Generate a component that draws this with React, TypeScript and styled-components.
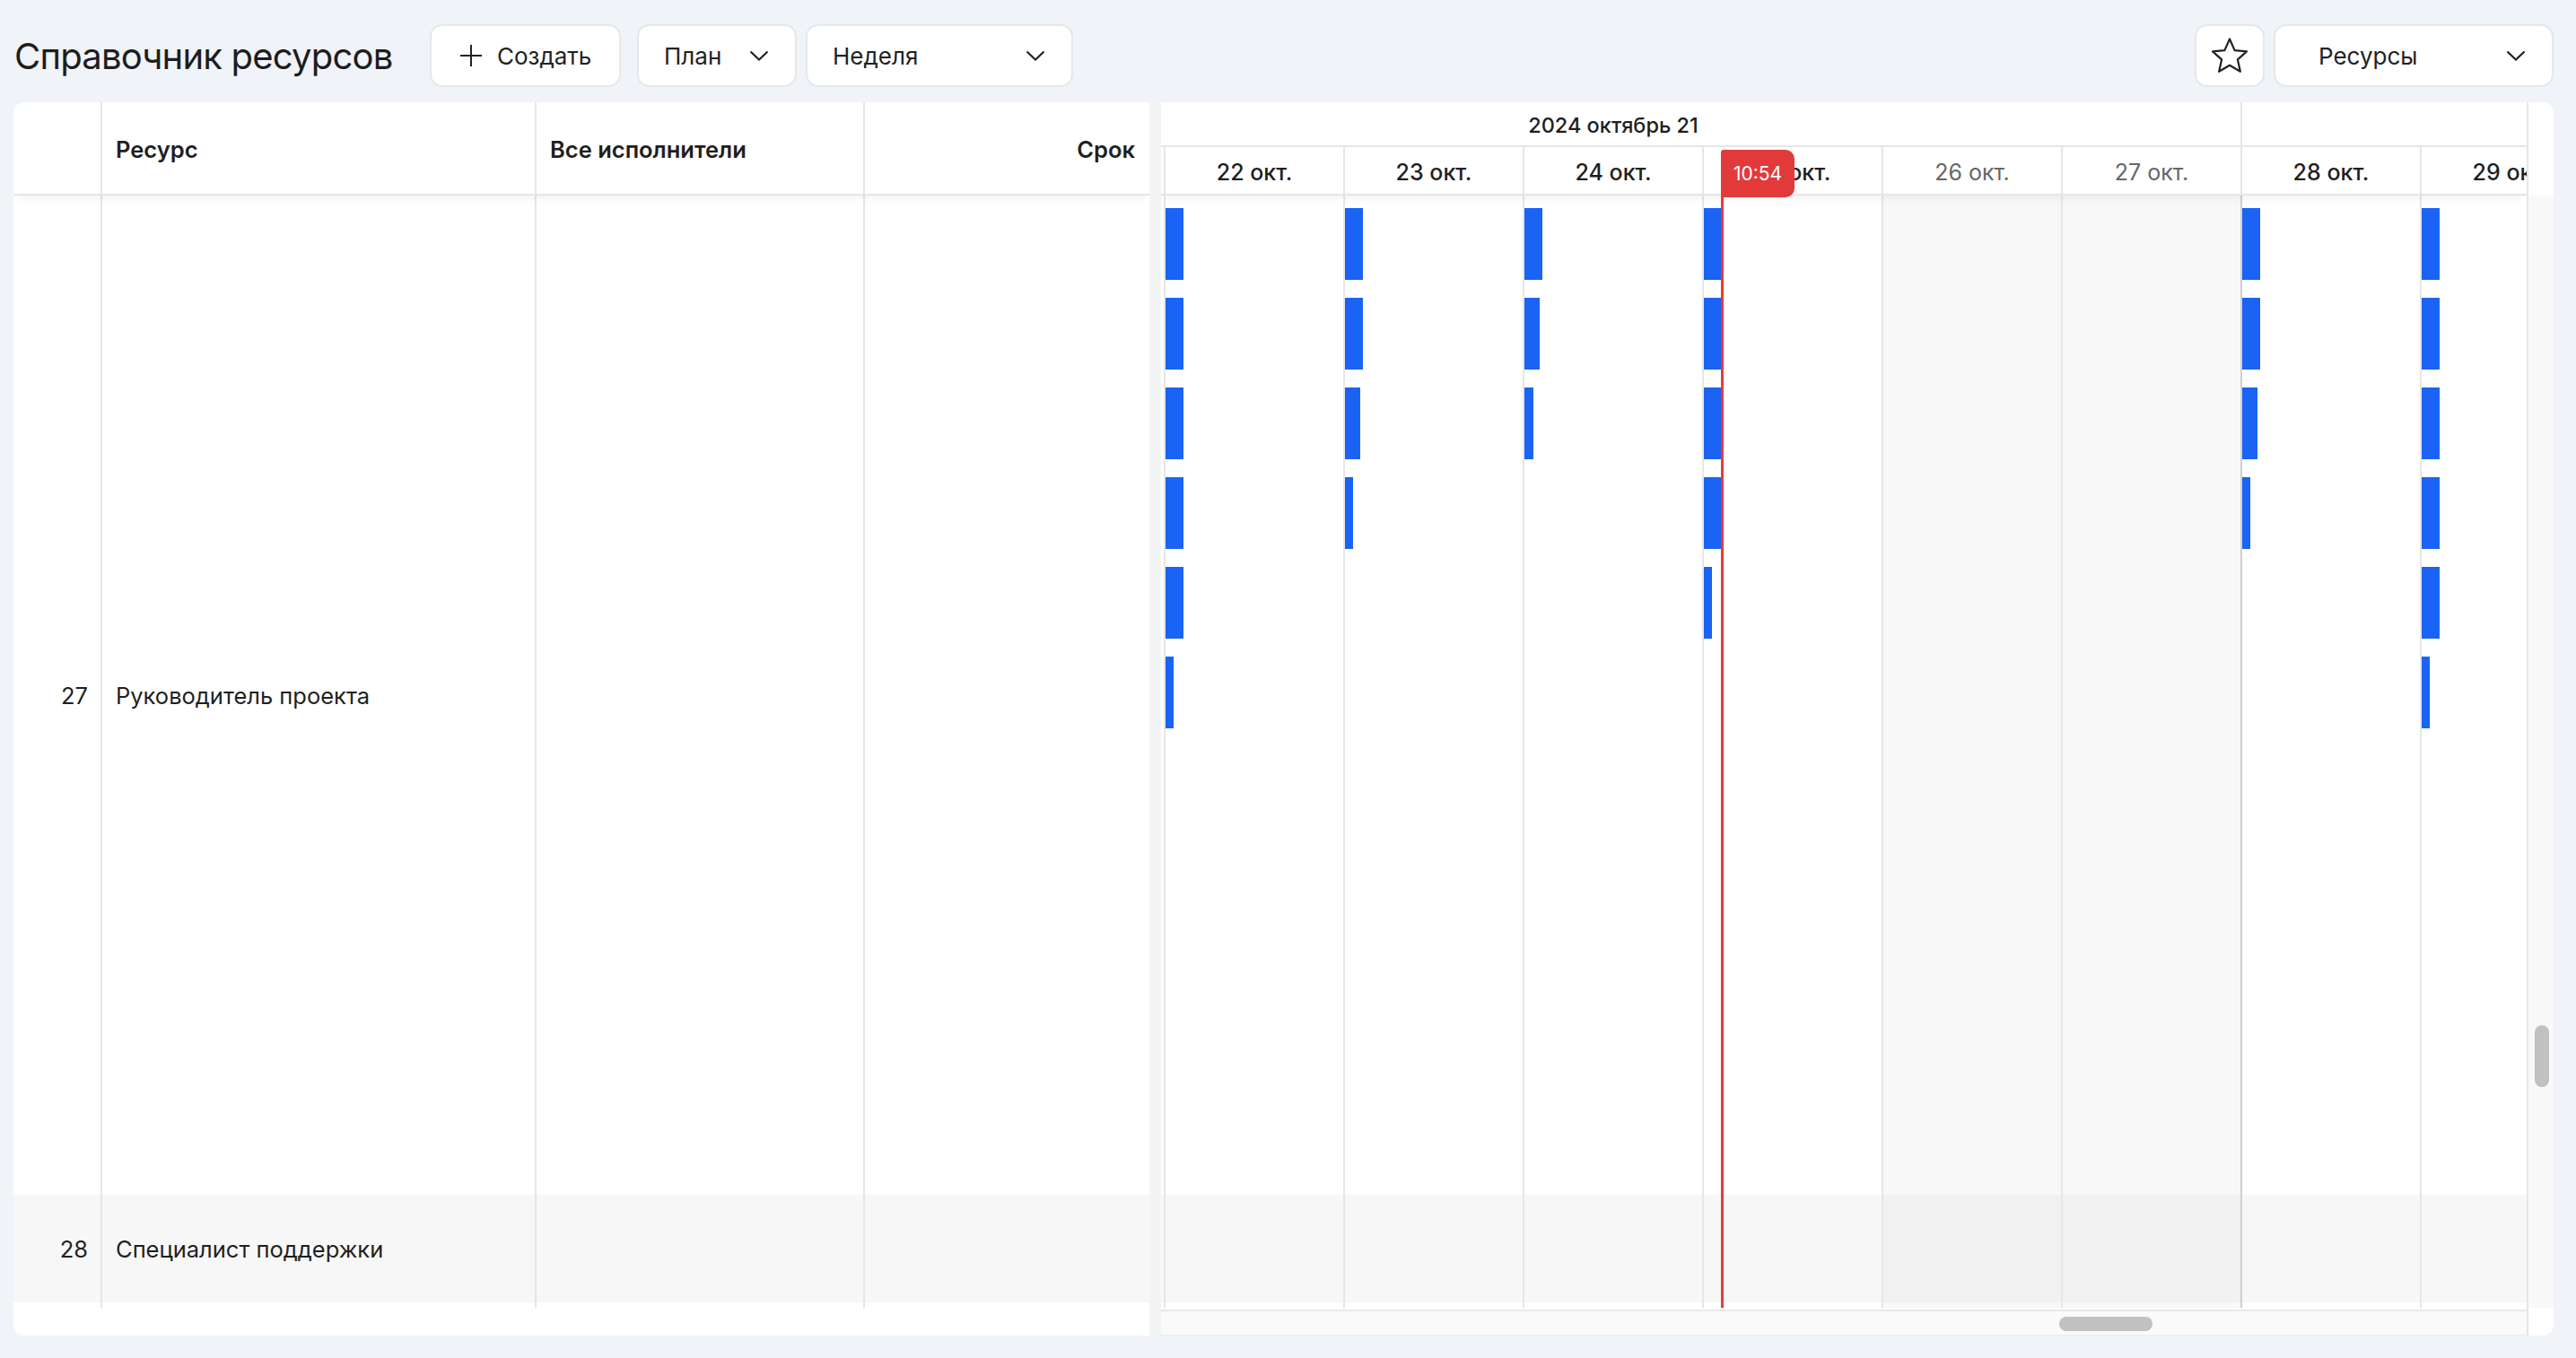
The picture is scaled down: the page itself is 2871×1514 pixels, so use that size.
import styled, { createGlobalStyle } from 'styled-components';

const GlobalStyle = createGlobalStyle`
  html, body {
    margin: 0;
    padding: 0;
    background: #f0f3f7;
  }
  body {
    font-family: Inter, 'Noto Sans', 'Liberation Sans', sans-serif;
    color: #1f1f1f;
  }
  * {
    box-sizing: border-box;
  }
`;

const DAY_W = 200;
const SCROLL_X = 195;
const LINE = '#e6e6e6';

const Page = styled.div`
  width: 2871px;
  height: 1514px;
  padding: 27px 25px 25px 15px;
  display: flex;
  flex-direction: column;
  gap: 17px;
  overflow: hidden;
`;

const Toolbar = styled.div`
  display: flex;
  align-items: center;
  gap: 10px;
  height: 70px;
  flex-shrink: 0;
`;

const Title = styled.h1`
  width: 454px;
  flex-shrink: 0;
  margin: 0;
  padding-left: 1px;
  font-size: 40px;
  font-weight: 400;
  color: #1d1d1f;
  letter-spacing: -0.8px;
  white-space: nowrap;
`;

const Button = styled.button`
  height: 70px;
  display: flex;
  align-items: center;
  background: #fff;
  border: 2px solid #e5e7ea;
  border-radius: 14px;
  font-family: inherit;
  font-size: 26px;
  color: #222;
  cursor: pointer;
  flex-shrink: 0;
`;

const CreateButton = styled(Button)`
  width: 213px;
  padding: 0 0 0 31px;
  gap: 16px;
  margin-right: 8px;
`;

const Select = styled(Button)<{ $w: number; $pl: number }>`
  width: ${({ $w }) => $w}px;
  padding: 0 29px 0 ${({ $pl }) => $pl - 2}px;
  justify-content: space-between;
`;

const IconButton = styled(Button)`
  width: 78px;
  justify-content: center;
  padding: 0;
`;

const Spacer = styled.div`
  flex: 1;
`;

const Card = styled.div`
  display: flex;
  height: 1375px;
  flex-shrink: 0;
`;

const LeftPanel = styled.div`
  width: 1266px;
  flex-shrink: 0;
  background: #fff;
  border-radius: 12px 0 0 12px;
  display: flex;
  flex-direction: column;
  overflow: hidden;
`;

const Splitter = styled.div`
  width: 13px;
  flex-shrink: 0;
  background: #f3f4f6;
`;

const RightPanel = styled.div`
  flex: 1;
  background: #fff;
  border-radius: 0 12px 12px 0;
  display: flex;
  overflow: hidden;
`;

const COLS = '99px 484px 366px 317px';

const HeadRow = styled.div`
  display: grid;
  grid-template-columns: ${COLS};
  height: 104px;
  flex-shrink: 0;
  border-bottom: 2px solid ${LINE};
  box-shadow: 0 6px 10px -4px rgba(0, 0, 0, 0.07);
  position: relative;
  z-index: 1;
`;

const HeadCell = styled.div<{ $right?: boolean; $last?: boolean }>`
  display: flex;
  align-items: center;
  justify-content: ${({ $right }) => ($right ? 'flex-end' : 'flex-start')};
  padding: 2px 16px 0 15px;
  border-right: ${({ $last }) => ($last ? 'none' : `2px solid ${LINE}`)};
  font-size: 25.5px;
  font-weight: 600;
  color: #1f1f1f;
`;

const TableBody = styled.div`
  height: 1240px;
  flex-shrink: 0;
  display: flex;
  flex-direction: column;
`;

const Row = styled.div<{ $h?: number; $alt?: boolean }>`
  display: grid;
  grid-template-columns: ${COLS};
  ${({ $h }) => ($h ? `height: ${$h}px;` : 'flex: 1;')}
  flex-shrink: 0;
  background: ${({ $alt }) => ($alt ? '#f7f7f7' : '#fff')};
`;

const Cell = styled.div<{ $num?: boolean; $last?: boolean }>`
  display: flex;
  align-items: center;
  justify-content: ${({ $num }) => ($num ? 'flex-end' : 'flex-start')};
  padding: ${({ $num }) => ($num ? '0 14px 0 0' : '0 15px')};
  border-right: ${({ $last }) => ($last ? 'none' : `2px solid ${LINE}`)};
  font-size: 25.5px;
  color: #1f1f1f;
`;

const PanelFoot = styled.div`
  flex: 1;
`;

const TimelineCol = styled.div`
  width: 1524px;
  flex-shrink: 0;
  border-right: 2px solid ${LINE};
  display: flex;
  flex-direction: column;
  position: relative;
  overflow: hidden;
`;

const TimeHeader = styled.div`
  height: 104px;
  flex-shrink: 0;
  border-bottom: 2px solid ${LINE};
  box-shadow: 0 6px 10px -4px rgba(0, 0, 0, 0.07);
  position: relative;
  z-index: 1;
  background: #fff;
  overflow: hidden;
`;

const Track = styled.div`
  display: flex;
  flex-direction: column;
  height: 100%;
  width: max-content;
`;

const MonthRow = styled.div`
  display: flex;
  height: 50px;
  border-bottom: 2px solid ${LINE};
`;

const WeekCell = styled.div`
  width: ${DAY_W * 7}px;
  display: flex;
  align-items: center;
  justify-content: center;
  padding-top: 2px;
  border-right: 2px solid ${LINE};
  font-size: 23.5px;
  font-weight: 500;
  color: #1f1f1f;
`;

const DayRow = styled.div`
  display: flex;
  flex: 1;
`;

const DayCell = styled.div<{ $weekend: boolean }>`
  width: ${DAY_W}px;
  display: flex;
  align-items: center;
  justify-content: center;
  padding-top: 4px;
  border-right: 2px solid ${LINE};
  font-size: 25px;
  font-weight: ${({ $weekend }) => ($weekend ? 400 : 500)};
  color: ${({ $weekend }) => ($weekend ? '#666' : '#1f1f1f')};
`;

const TimeBody = styled.div`
  height: 1240px;
  flex-shrink: 0;
  overflow: hidden;
`;

const BodyRow = styled.div<{ $h?: number }>`
  display: flex;
  ${({ $h }) => ($h ? `height: ${$h}px;` : 'flex: 1;')}
  flex-shrink: 0;
`;

const Slot = styled.div<{ $weekend: boolean; $alt?: boolean; $weekEnd: boolean }>`
  width: ${DAY_W}px;
  flex-shrink: 0;
  display: flex;
  flex-direction: column;
  align-items: flex-start;
  gap: 20px;
  padding-top: 14px;
  border-right: 2px solid ${({ $weekEnd }) => ($weekEnd ? '#cfcfcf' : LINE)};
  background: ${({ $weekend, $alt }) =>
    $alt ? ($weekend ? '#f1f1f1' : '#f7f7f7') : $weekend ? '#f8f8f8' : '#fff'};
`;

const Bar = styled.div`
  height: 80px;
  background: #1a63f4;
  flex-shrink: 0;
`;

const HScroll = styled.div`
  flex: 1;
  margin-top: 2px;
  border-top: 2px solid #e8e8e8;
  border-bottom: 1px solid #ebebeb;
  background: #fafafa;
  padding-top: 6px;
`;

const Thumb = styled.div<{ $w: number; $h: number }>`
  width: ${({ $w }) => $w}px;
  height: ${({ $h }) => $h}px;
  border-radius: 8px;
  background: #c1c1c1;
`;

const ScrollCol = styled.div`
  flex: 1;
  display: flex;
  flex-direction: column;
`;

const ScrollHead = styled.div`
  height: 104px;
  flex-shrink: 0;
`;

const VTrack = styled.div`
  height: 1240px;
  flex-shrink: 0;
  background: #f9f9f9;
  padding-left: 7px;
`;

const NowLine = styled.div`
  position: absolute;
  top: 104px;
  bottom: 31px;
  width: 3px;
  background: #e33b3b;
  z-index: 2;
`;

const NowBadge = styled.div`
  position: absolute;
  top: 53px;
  height: 53px;
  width: 82px;
  display: flex;
  align-items: center;
  justify-content: center;
  background: #e23a3a;
  color: #fff;
  font-size: 21px;
  border-radius: 3px 10px 10px 3px;
  z-index: 3;
`;

const Plus = () => (
  <svg width="26" height="26" viewBox="0 0 26 26" fill="none" stroke="#222" strokeWidth="2">
    <path d="M13 1v24M1 13h24" />
  </svg>
);

const Chevron = () => (
  <svg width="22" height="12" viewBox="0 0 22 12" fill="none" stroke="#222" strokeWidth="2.2">
    <path d="M1.5 1.5l9.5 9 9.5-9" />
  </svg>
);

const Star = () => (
  <svg width="44" height="42" viewBox="0 0 44 42" fill="none" stroke="#222" strokeWidth="2.2" strokeLinejoin="round">
    <path d="M22 2.5l5.6 12.6 13.4 1.3-10.1 9 3 13.4L22 31.8 10.1 38.8l3-13.4-10.1-9 13.4-1.3z" />
  </svg>
);

type Day = { d: number; m: string; weekend: boolean; bars: number[] };

const days: Day[] = [
  { d: 21, m: 'окт.', weekend: false, bars: [] },
  { d: 22, m: 'окт.', weekend: false, bars: [20, 20, 20, 20, 20, 9] },
  { d: 23, m: 'окт.', weekend: false, bars: [20, 20, 17, 9] },
  { d: 24, m: 'окт.', weekend: false, bars: [20, 17, 10] },
  { d: 25, m: 'окт.', weekend: false, bars: [20, 20, 20, 20, 9] },
  { d: 26, m: 'окт.', weekend: true, bars: [] },
  { d: 27, m: 'окт.', weekend: true, bars: [] },
  { d: 28, m: 'окт.', weekend: false, bars: [20, 20, 17, 9] },
  { d: 29, m: 'окт.', weekend: false, bars: [20, 20, 20, 20, 20, 9] },
  { d: 30, m: 'окт.', weekend: false, bars: [20, 20, 20, 20] },
  { d: 31, m: 'окт.', weekend: false, bars: [20, 20, 20] },
  { d: 1, m: 'нояб.', weekend: false, bars: [20, 20] },
  { d: 2, m: 'нояб.', weekend: true, bars: [] },
  { d: 3, m: 'нояб.', weekend: true, bars: [] },
];

const weeks = ['2024 октябрь 21', '2024 октябрь 28'];

const nowOffset = 4 * DAY_W - SCROLL_X + 19;

export default function App() {
  return (
    <>
      <GlobalStyle />
      <Page>
        <Toolbar>
          <Title>Справочник ресурсов</Title>
          <CreateButton>
            <Plus />
            Создать
          </CreateButton>
          <Select $w={178} $pl={30}>
            План
            <Chevron />
          </Select>
          <Select $w={298} $pl={30}>
            Неделя
            <Chevron />
          </Select>
          <Spacer />
          <IconButton aria-label="Избранное">
            <Star />
          </IconButton>
          <Select $w={312} $pl={50}>
            Ресурсы
            <Chevron />
          </Select>
        </Toolbar>

        <Card>
          <LeftPanel>
            <HeadRow>
              <HeadCell />
              <HeadCell>Ресурс</HeadCell>
              <HeadCell>Все исполнители</HeadCell>
              <HeadCell $right $last>
                Срок
              </HeadCell>
            </HeadRow>
            <TableBody>
              <Row $h={1114}>
                <Cell $num>27</Cell>
                <Cell>Руководитель проекта</Cell>
                <Cell />
                <Cell $last />
              </Row>
              <Row $h={120} $alt>
                <Cell $num>28</Cell>
                <Cell>Специалист поддержки</Cell>
                <Cell />
                <Cell $last />
              </Row>
              <Row>
                <Cell />
                <Cell />
                <Cell />
                <Cell $last />
              </Row>
            </TableBody>
            <PanelFoot />
          </LeftPanel>

          <Splitter />

          <RightPanel>
            <TimelineCol>
              <TimeHeader>
                <Track style={{ marginLeft: -SCROLL_X }}>
                  <MonthRow>
                    {weeks.map((w) => (
                      <WeekCell key={w}>{w}</WeekCell>
                    ))}
                  </MonthRow>
                  <DayRow>
                    {days.map((day) => (
                      <DayCell key={day.d} $weekend={day.weekend}>
                        {day.d} {day.m}
                      </DayCell>
                    ))}
                  </DayRow>
                </Track>
              </TimeHeader>
              <TimeBody>
                <Track style={{ marginLeft: -SCROLL_X }}>
                  <BodyRow $h={1114}>
                    {days.map((day, i) => (
                      <Slot key={day.d} $weekend={day.weekend} $weekEnd={i === 6 || i === 13}>
                        {day.bars.map((w, j) => (
                          <Bar key={j} style={{ width: w }} />
                        ))}
                      </Slot>
                    ))}
                  </BodyRow>
                  <BodyRow $h={120}>
                    {days.map((day, i) => (
                      <Slot key={day.d} $alt $weekend={day.weekend} $weekEnd={i === 6 || i === 13} />
                    ))}
                  </BodyRow>
                  <BodyRow>
                    {days.map((day, i) => (
                      <Slot key={day.d} $weekend={day.weekend} $weekEnd={i === 6 || i === 13} />
                    ))}
                  </BodyRow>
                </Track>
              </TimeBody>
              <HScroll>
                <Thumb $w={104} $h={16} style={{ marginLeft: 1001 }} />
              </HScroll>
              <NowBadge style={{ left: nowOffset }}>10:54</NowBadge>
              <NowLine style={{ left: nowOffset }} />
            </TimelineCol>
            <ScrollCol>
              <ScrollHead />
              <VTrack>
                <Thumb $w={16} $h={69} style={{ marginTop: 925 }} />
              </VTrack>
            </ScrollCol>
          </RightPanel>
        </Card>
      </Page>
    </>
  );
}
